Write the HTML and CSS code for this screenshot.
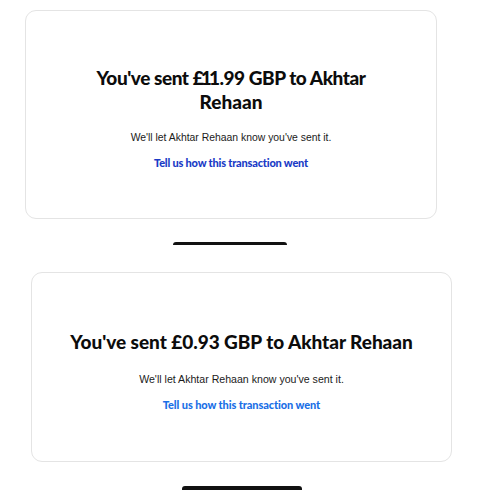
FILE: index.html
```html
<!DOCTYPE html>
<html>
<head>
<meta charset="utf-8">
<link rel="stylesheet" href="styles.css">
</head>
<body>
<section class="shot shot-one">
  <div class="card card-one">
    <h1 class="title title-one">You've sent <span class="narrow">£1</span>1.99 GBP to Akhtar<br><span class="name">Rehaan</span></h1>
    <p class="sub sub-one">We'll let Akhtar Rehaan know you've sent it.</p>
    <a class="link link-one">Tell us how this transaction went</a>
  </div>
  <div class="bar bar-one"></div>
</section>
<section class="shot shot-two">
  <div class="card card-two">
    <h1 class="title title-two">You've sent £0.93 GBP to Akhtar Rehaan</h1>
    <p class="sub sub-two">We'll let Akhtar Rehaan know you've sent it.</p>
    <a class="link link-two">Tell us how this transaction went</a>
  </div>
  <div class="bar bar-two"></div>
</section>
</body>
</html>
```
FILE: styles.css
```css
html, body {
  margin: 0;
  padding: 0;
  background: #ffffff;
}
body {
  width: 500px;
  height: 500px;
  overflow: hidden;
}
.shot {
  height: 250px;
  box-sizing: border-box;
  display: flex;
  flex-direction: column;
}
.shot-one {
  padding: 10px 0 0 25px;
}
.shot-two {
  padding: 22px 0 0 31px;
}
.card {
  box-sizing: border-box;
  border: 1px solid #e4e4e4;
  border-radius: 11px;
  display: flex;
  flex-direction: column;
  align-items: center;
  text-align: center;
}
.card-one {
  width: 412px;
  height: 209px;
  padding-top: 55px;
}
.card-two {
  width: 421px;
  height: 190px;
  padding-top: 57px;
}
.title {
  margin: 0;
  font-family: Lato, "Noto Sans", sans-serif;
  font-weight: 900;
  font-size: 19px;
  line-height: 24px;
  color: #0c0c0c;
}
.title-one {
  letter-spacing: -0.45px;
}
.title-one .narrow {
  letter-spacing: -2.9px;
}
.title-one .name {
  letter-spacing: 0;
}
.title-two {
  letter-spacing: -0.05px;
}
.sub {
  margin: 0;
  font-family: "Liberation Sans", Arial, sans-serif;
  line-height: 14px;
  color: #1a1a1a;
}
.sub-one {
  margin-top: 17px;
  font-size: 10.4px;
}
.sub-two {
  margin-top: 18px;
  font-size: 10.6px;
}
.link {
  font-family: Lato, "Noto Sans", sans-serif;
  font-weight: 900;
  font-size: 11px;
  line-height: 16px;
}
.link-one {
  margin-top: 10px;
  color: #1a3bc6;
  letter-spacing: -0.2px;
}
.link-two {
  margin-top: 11px;
  color: #1a6fe6;
  letter-spacing: -0.1px;
}
.bar {
  background: #111;
  border-radius: 3px 3px 0 0;
}
.bar-one {
  margin: 23px 0 0 148px;
  width: 114px;
  height: 3px;
}
.bar-two {
  margin: 24px 0 0 151px;
  width: 120px;
  height: 4px;
}
```
